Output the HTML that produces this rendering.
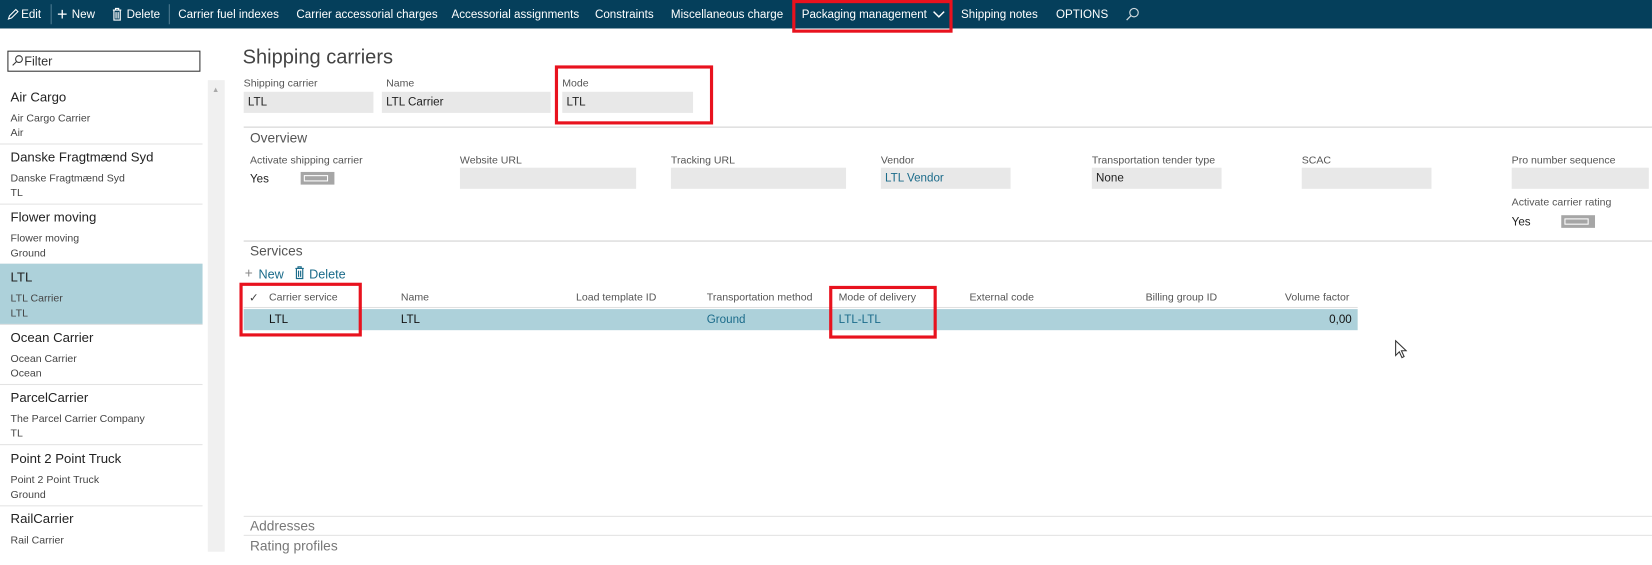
<!DOCTYPE html>
<html><head><meta charset="utf-8"><style>
html,body{margin:0;padding:0;width:1652px;height:552px;overflow:hidden;background:#fff;font-family:"Liberation Sans",Arial,sans-serif;}
#w{position:absolute;left:0;top:0;width:1566px;height:523px;transform:scale(1.0549);transform-origin:0 0;}
.a{position:absolute;white-space:nowrap;}
.nav{position:absolute;left:0;top:0;width:1566px;height:27px;background:#053F5B;}
.n{position:absolute;top:8px;color:#fff;font-size:11px;white-space:nowrap;}
.lbl{position:absolute;font-size:10px;color:#555;white-space:nowrap;}
.fld{position:absolute;background:#e8e8e8;height:20px;font-size:11px;color:#222;line-height:20px;padding-left:4px;box-sizing:border-box;white-space:nowrap;}
.red{position:absolute;border:3px solid #E8121E;box-sizing:border-box;}
.it{position:absolute;left:0;width:192px;height:57px;border-bottom:1px solid #e3e3e3;}
.it .t{position:absolute;left:10px;top:6px;font-size:12.5px;color:#222;}
.it .s{position:absolute;left:10px;font-size:10px;color:#444;}
.hl{position:absolute;height:1px;background:#d0d0d0;}
.tog{position:absolute;width:32px;height:12px;background:#a6a6a6;}
.tog i{position:absolute;left:3px;top:3px;width:21px;height:4px;border:1px solid #fff;}
.teal{color:#1b6b8a;}
</style></head><body><div id="w">
<div class="nav"></div>
<svg class="a" style="left:6px;top:8px" width="12" height="12" viewBox="0 0 12 12"><path d="M2 10 L3 7 L9 1 L11 3 L5 9 Z M2 10 L5 9" fill="none" stroke="#fff" stroke-width="1"/></svg>
<div class="n" style="left:20px">Edit</div>
<div class="a" style="left:48px;top:4px;width:1px;height:19px;background:#4d7a90"></div>
<div class="n" style="left:54px;top:4px;font-size:17px;font-weight:300">+</div>
<div class="n" style="left:68px">New</div>
<svg class="a" style="left:106px;top:7px" width="10" height="13" viewBox="0 0 10 13"><path d="M1 2.5h8M3.5 2.5V1h3v1.5M2 2.5v9.5h6V2.5M4 4.5v6M6 4.5v6" fill="none" stroke="#fff" stroke-width="1.1"/></svg>
<div class="n" style="left:120px">Delete</div>
<div class="a" style="left:160px;top:4px;width:1px;height:19px;background:#4d7a90"></div>
<div class="n" style="left:169px">Carrier fuel indexes</div>
<div class="n" style="left:281px">Carrier accessorial charges</div>
<div class="n" style="left:428px">Accessorial assignments</div>
<div class="n" style="left:564px">Constraints</div>
<div class="n" style="left:636px">Miscellaneous charge</div>
<div class="n" style="left:760px">Packaging management</div>
<svg class="a" style="left:884px;top:10px" width="12" height="8" viewBox="0 0 12 8"><path d="M1 1 L6 6 L11 1" fill="none" stroke="#fff" stroke-width="1.4"/></svg>
<div class="red" style="left:751px;top:0;width:152px;height:31px"></div>
<div class="n" style="left:911px">Shipping notes</div>
<div class="n" style="left:1001px">OPTIONS</div>
<svg class="a" style="left:1067px;top:7px" width="13" height="13" viewBox="0 0 13 13"><circle cx="8" cy="5" r="4" fill="none" stroke="#cfd9de" stroke-width="1.1"/><path d="M5 8 L1 12" stroke="#cfd9de" stroke-width="1.2"/></svg>

<div class="a" style="left:7px;top:48px;width:183px;height:20px;border:1px solid #333;box-sizing:border-box"></div>
<svg class="a" style="left:11px;top:52px" width="11" height="11" viewBox="0 0 11 11"><circle cx="7" cy="4" r="3.2" fill="none" stroke="#333"/><path d="M4.5 6.5 L1 10" stroke="#333"/></svg>
<div class="a" style="left:23px;top:51px;font-size:12px;color:#333">Filter</div>
<div class="a" style="left:197px;top:76px;width:16px;height:447px;background:#f0f0f0"></div>
<div class="a" style="left:201px;top:82px;font-size:7px;color:#aaa">▲</div>
<div class="it" style="top:79px"><div class="t">Air Cargo</div><div class="s" style="top:28px">Air Cargo Carrier</div><div class="s" style="top:42px">Air</div></div>
<div class="it" style="top:136px"><div class="t">Danske Fragtmænd Syd</div><div class="s" style="top:28px">Danske Fragtmænd Syd</div><div class="s" style="top:42px">TL</div></div>
<div class="it" style="top:193px"><div class="t">Flower moving</div><div class="s" style="top:28px">Flower moving</div><div class="s" style="top:42px">Ground</div></div>
<div class="it" style="top:250px;background:#ADD1DA"><div class="t">LTL</div><div class="s" style="top:28px">LTL Carrier</div><div class="s" style="top:42px">LTL</div></div>
<div class="it" style="top:307px"><div class="t">Ocean Carrier</div><div class="s" style="top:28px">Ocean Carrier</div><div class="s" style="top:42px">Ocean</div></div>
<div class="it" style="top:364px"><div class="t">ParcelCarrier</div><div class="s" style="top:28px">The Parcel Carrier Company</div><div class="s" style="top:42px">TL</div></div>
<div class="it" style="top:422px"><div class="t">Point 2 Point Truck</div><div class="s" style="top:28px">Point 2 Point Truck</div><div class="s" style="top:42px">Ground</div></div>
<div class="it" style="top:479px;border:0"><div class="t">RailCarrier</div><div class="s" style="top:28px">Rail Carrier</div></div>

<div class="a" style="left:230px;top:44px;font-size:19px;color:#444">Shipping carriers</div>
<div class="lbl" style="left:231px;top:74px">Shipping carrier</div>
<div class="lbl" style="left:366px;top:74px">Name</div>
<div class="lbl" style="left:533px;top:74px">Mode</div>
<div class="fld" style="left:231px;top:87px;width:123px">LTL</div>
<div class="fld" style="left:362px;top:87px;width:160px">LTL Carrier</div>
<div class="fld" style="left:533px;top:87px;width:124px">LTL</div>
<div class="red" style="left:526px;top:62px;width:150px;height:56px"></div>

<div class="hl" style="left:231px;top:120px;width:1335px"></div>
<div class="a" style="left:237px;top:123px;font-size:13px;color:#555">Overview</div>
<div class="lbl" style="left:237px;top:147px">Activate shipping carrier</div>
<div class="lbl" style="left:436px;top:147px">Website URL</div>
<div class="lbl" style="left:636px;top:147px">Tracking URL</div>
<div class="lbl" style="left:835px;top:147px">Vendor</div>
<div class="lbl" style="left:1035px;top:147px">Transportation tender type</div>
<div class="lbl" style="left:1234px;top:147px">SCAC</div>
<div class="lbl" style="left:1433px;top:147px">Pro number sequence</div>
<div class="a" style="left:237px;top:164px;font-size:11px;color:#222">Yes</div>
<div class="tog" style="left:285px;top:163px"><i></i></div>
<div class="fld" style="left:436px;top:159px;width:167px"></div>
<div class="fld" style="left:636px;top:159px;width:166px"></div>
<div class="fld" style="left:835px;top:159px;width:123px;color:#1b6b8a">LTL Vendor</div>
<div class="fld" style="left:1035px;top:159px;width:123px">None</div>
<div class="fld" style="left:1234px;top:159px;width:123px"></div>
<div class="fld" style="left:1433px;top:159px;width:130px"></div>
<div class="lbl" style="left:1433px;top:187px">Activate carrier rating</div>
<div class="a" style="left:1433px;top:205px;font-size:11px;color:#222">Yes</div>
<div class="tog" style="left:1480px;top:204px"><i></i></div>

<div class="hl" style="left:231px;top:228px;width:1335px"></div>
<div class="a" style="left:237px;top:230px;font-size:13px;color:#555">Services</div>
<div class="a" style="left:232px;top:251px;font-size:13px;font-weight:300;color:#888">+</div>
<div class="a teal" style="left:245px;top:253px;font-size:12px">New</div>
<svg class="a" style="left:279px;top:252px" width="10" height="13" viewBox="0 0 10 13"><path d="M1 2.5h8M3.5 2.5V1h3v1.5M2 2.5v9.5h6V2.5M4 4.5v6M6 4.5v6" fill="none" stroke="#1b6b8a" stroke-width="1.1"/></svg>
<div class="a teal" style="left:293px;top:253px;font-size:12px">Delete</div>

<div class="a" style="left:236px;top:276px;font-size:11px;color:#444">✓</div>
<div class="lbl" style="left:255px;top:277px">Carrier service</div>
<div class="lbl" style="left:380px;top:277px">Name</div>
<div class="lbl" style="left:546px;top:277px">Load template ID</div>
<div class="lbl" style="left:670px;top:277px">Transportation method</div>
<div class="lbl" style="left:795px;top:277px">Mode of delivery</div>
<div class="lbl" style="left:919px;top:277px">External code</div>
<div class="lbl" style="left:1086px;top:277px">Billing group ID</div>
<div class="lbl" style="left:1218px;top:277px">Volume factor</div>
<div class="hl" style="left:231px;top:291px;width:1056px;background:#e0e0e0"></div>
<div class="a" style="left:231px;top:293px;width:1056px;height:20px;background:#ADD1DA"></div>
<div class="a" style="left:255px;top:297px;font-size:11px;color:#111">LTL</div>
<div class="a" style="left:380px;top:297px;font-size:11px;color:#111">LTL</div>
<div class="a teal" style="left:670px;top:297px;font-size:11px">Ground</div>
<div class="a teal" style="left:795px;top:297px;font-size:11px">LTL-LTL</div>
<div class="a" style="left:1260px;top:297px;font-size:11px;color:#111">0,00</div>
<div class="red" style="left:227px;top:268px;width:116px;height:51px"></div>
<div class="red" style="left:786px;top:271px;width:102px;height:50px"></div>
<svg class="a" style="left:1322px;top:322px" width="12" height="18" viewBox="0 0 12 18"><path d="M1 1 L1 15 L4.5 11.5 L7 17 L9 16 L6.5 10.5 L11 10.5 Z" fill="#fff" stroke="#333" stroke-width="1"/></svg>

<div class="hl" style="left:231px;top:489px;width:1335px;background:#e3e3e3"></div>
<div class="a" style="left:237px;top:491px;font-size:13px;color:#777">Addresses</div>
<div class="hl" style="left:231px;top:507px;width:1335px;background:#e3e3e3"></div>
<div class="a" style="left:237px;top:510px;font-size:13px;color:#777">Rating profiles</div>
</div></body></html>
